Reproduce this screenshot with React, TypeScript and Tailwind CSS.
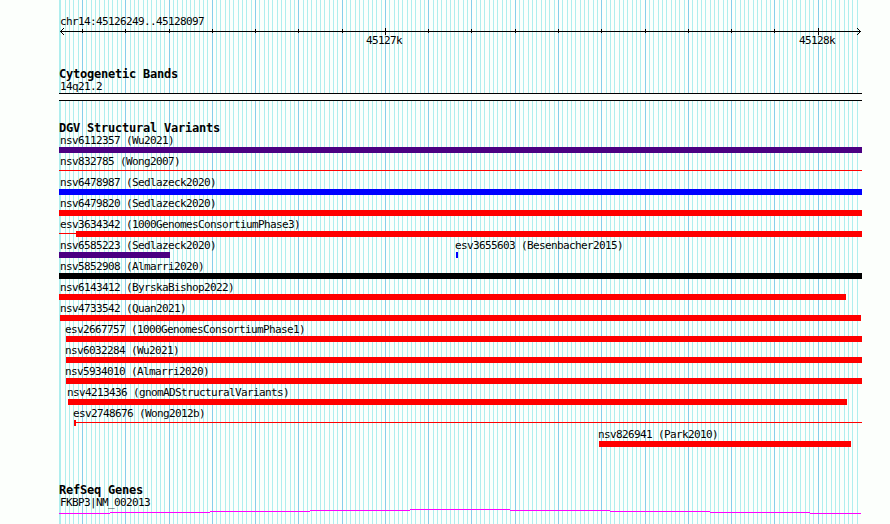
interface Feature {
    name: string;
    start: number;
    end: number;
    labelX: number;
    color: string;
    // thin connector drawn before / after the solid part
    solidStart?: number;
    solidEnd?: number;
    thin?: boolean;
}

const LEFT = 59;
const RIGHT = 862;
const ORIGIN = 385.42; // x of 45127000
const MINOR_STEP = 4.328;

const RED = 'bg-[#ff0000]';
const BLUE = 'bg-[#0000ff]';
const INDIGO = 'bg-[#4b0082]';

const rows: Feature[][] = [
    [{ name: 'nsv6112357 (Wu2021)', start: 59, end: 862, labelX: 60, color: INDIGO }],
    [{ name: 'nsv832785 (Wong2007)', start: 59, end: 862, labelX: 60, color: RED, thin: true }],
    [{ name: 'nsv6478987 (Sedlazeck2020)', start: 59, end: 862, labelX: 60, color: BLUE }],
    [{ name: 'nsv6479820 (Sedlazeck2020)', start: 59, end: 862, labelX: 60, color: RED }],
    [{ name: 'esv3634342 (1000GenomesConsortiumPhase3)', start: 59, end: 862, labelX: 60, color: RED, solidStart: 76 }],
    [
        { name: 'nsv6585223 (Sedlazeck2020)', start: 59, end: 170, labelX: 60, color: INDIGO },
        { name: 'esv3655603 (Besenbacher2015)', start: 456, end: 458, labelX: 455, color: BLUE },
    ],
    [{ name: 'nsv5852908 (Almarri2020)', start: 59, end: 862, labelX: 60, color: 'bg-black' }],
    [{ name: 'nsv6143412 (ByrskaBishop2022)', start: 59, end: 846, labelX: 60, color: RED }],
    [{ name: 'nsv4733542 (Quan2021)', start: 60, end: 861, labelX: 60, color: RED }],
    [{ name: 'esv2667757 (1000GenomesConsortiumPhase1)', start: 66, end: 862, labelX: 65, color: RED }],
    [{ name: 'nsv6032284 (Wu2021)', start: 66, end: 862, labelX: 65, color: RED }],
    [{ name: 'nsv5934010 (Almarri2020)', start: 66, end: 862, labelX: 65, color: RED }],
    [{ name: 'nsv4213436 (gnomADStructuralVariants)', start: 68, end: 847, labelX: 67, color: RED }],
    [{ name: 'esv2748676 (Wong2012b)', start: 74, end: 862, labelX: 73, color: RED, solidEnd: 76 }],
    [{ name: 'nsv826941 (Park2010)', start: 599, end: 851, labelX: 598, color: RED }],
];

const curve = [512, 511, 510, 509, 510, 511, 512];

const gridLines = Array.from({ length: 185 }, (_, i) => {
    const n = i - 75;
    return { x: Math.floor(ORIGIN + n * MINOR_STEP), major: n % 10 === 0, label: n % 100 === 0 };
});

const LABEL = "font-['DejaVu_Sans_Mono',monospace] text-[11px] leading-[12px] tracking-[-0.622px] whitespace-pre";

function Grid() {
    return (
        <svg className="absolute inset-0" width="890" height="524" shapeRendering="crispEdges">
            <rect x={LEFT} y="0" width="1" height="524" fill="#afeeee" />
            {gridLines.map((line) => (
                <rect key={line.x} x={line.x} y="0" width="1" height="524" fill={line.major ? '#87ceeb' : '#afeeee'} />
            ))}
        </svg>
    );
}

function Ruler() {
    return (
        <svg className="block" width="890" height="8" shapeRendering="crispEdges">
            <rect x="60" y="3" width="801" height="1" />
            {[1, 2, 3].map((d) => (
                <g key={d}>
                    <rect x={60 + d} y={3 - d} width="1" height="1" />
                    <rect x={60 + d} y={3 + d} width="1" height="1" />
                    <rect x={860 - d} y={3 - d} width="1" height="1" />
                    <rect x={860 - d} y={3 + d} width="1" height="1" />
                </g>
            ))}
            {gridLines.filter((line) => line.major).map((line) => (
                <rect key={line.x} x={line.x} y={line.label ? 0 : 1} width="1" height={line.label ? 7 : 4} />
            ))}
        </svg>
    );
}

function Heading({ children }: { children: string }) {
    return (
        <h2 className="pl-[59px] font-['DejaVu_Sans_Mono',monospace] text-[12px] leading-[13px] font-bold tracking-[-0.225px] whitespace-pre">
            {children}
        </h2>
    );
}

function FeatureBar({ feature, offset }: { feature: Feature; offset: number }) {
    const { name, start, end, labelX, color, thin } = feature;
    const solidStart = feature.solidStart ?? start;
    const solidEnd = feature.solidEnd ?? end;

    return (
        <div className="shrink-0" style={{ marginLeft: offset, width: end - start }}>
            <div className={`${LABEL} h-3`} style={{ marginLeft: labelX - start }}>{name}</div>
            <div className="flex h-1.5">
                {thin ? (
                    <div className={`mt-[2px] h-px w-full ${color}`} />
                ) : (
                    <>
                        <div className={`mt-[2px] h-px ${color}`} style={{ width: solidStart - start }} />
                        <div className={`h-1.5 ${color}`} style={{ width: solidEnd - solidStart }} />
                        <div className={`mt-[2px] h-px ${color}`} style={{ width: end - solidEnd }} />
                    </>
                )}
            </div>
        </div>
    );
}

export default function App() {
    return (
        <div className="relative h-[524px] w-[890px] overflow-hidden bg-[#fcfffc] text-black">
            <Grid />

            <div className="relative flex flex-col">
                {/* Overview scale */}
                <div className={`${LABEL} mt-4 pl-[60px]`}>chr14:45126249..45128097</div>
                <Ruler />
                <div className={`${LABEL} -mt-px flex pl-[366px]`}>
                    <span className="w-[433px]">45127k</span>
                    <span>45128k</span>
                </div>

                {/* Cytogenetic bands */}
                <div className="mt-[21px] h-[54px]">
                    <Heading>Cytogenetic Bands</Heading>
                    <div className={`${LABEL} pl-[60px]`}>14q21.2</div>
                    <div className="ml-[59px] h-2 w-[803px] border-y border-black bg-[#fcfffc]" />
                </div>

                {/* Structural variants */}
                <div className="h-[362px]">
                    <Heading>DGV Structural Variants</Heading>
                    {rows.map((row) => (
                        <div key={row[0].name} className="flex h-[21px]">
                            {row.map((feature, i) => (
                                <FeatureBar
                                    key={feature.name}
                                    feature={feature}
                                    offset={feature.start - (i === 0 ? 0 : row[i - 1].end)}
                                />
                            ))}
                        </div>
                    ))}
                </div>

                {/* Genes */}
                <Heading>RefSeq Genes</Heading>
                <div className={`${LABEL} pl-[60px]`}>FKBP3|NM_002013</div>
                <svg className="block" width="890" height="15" viewBox="0 509 890 15" shapeRendering="crispEdges" fill="#ff00ff">
                    <rect x={LEFT} y="513" width="51" height="1" />
                    {curve.map((y, i) => (
                        <rect key={i} x={110 + i * 100} y={y} width="100" height="1" />
                    ))}
                    <rect x="810" y="513" width={RIGHT - 811} height="1" />
                </svg>
            </div>
        </div>
    );
}
